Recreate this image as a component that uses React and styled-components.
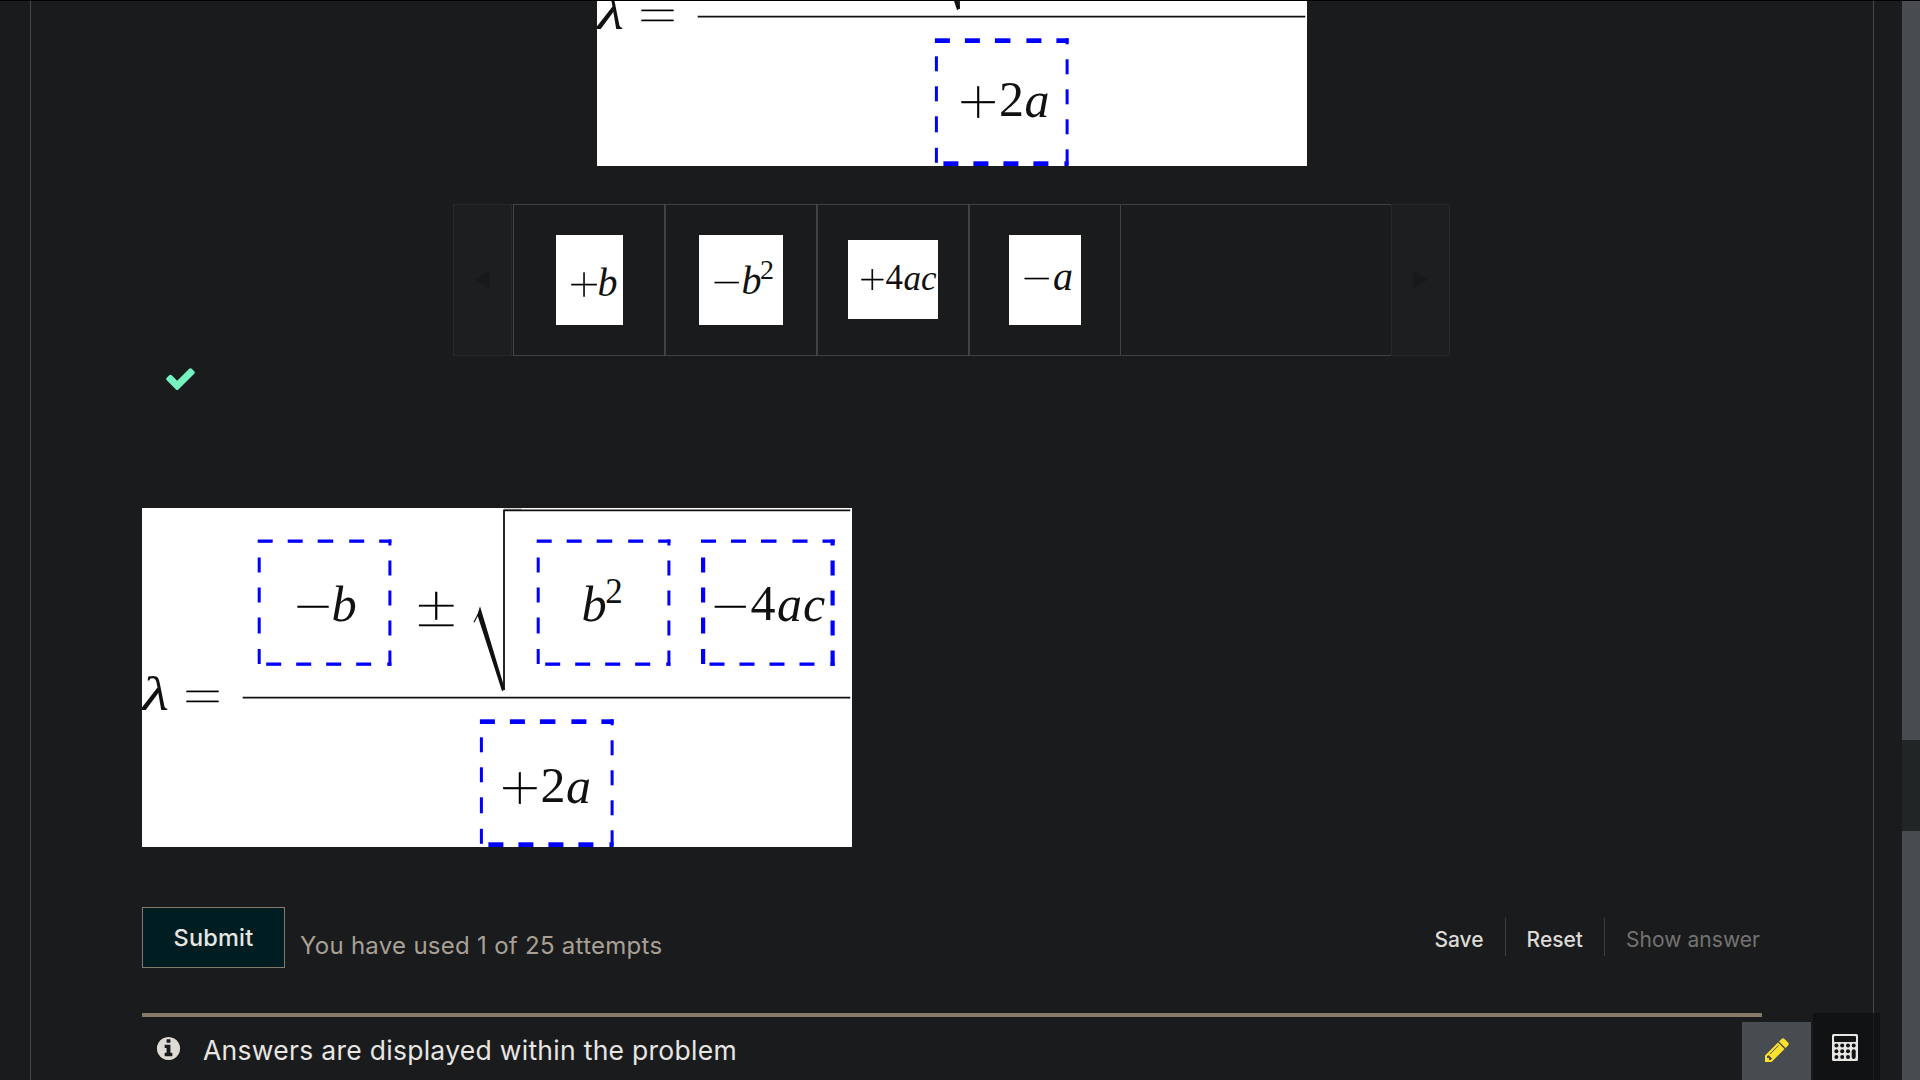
import React from "react";
import styled, { createGlobalStyle } from "styled-components";

const GlobalStyle = createGlobalStyle`
  * { box-sizing: border-box; }
  html, body { margin: 0; background: #1a1b1d; overflow: hidden; }
  body { font-family: Inter, "Liberation Sans", sans-serif; color: #e8e6e3; }
  button { font-family: inherit; cursor: pointer; }
`;

const Page = styled.div`
  display: flex;
  height: 1080px;
  border-top: 1px solid #000;
  overflow: hidden;
  background: #1a1b1d;
`;

const Frame = styled.main`
  width: 1844px;
  margin: 0 28px 0 30px;
  flex: none;
  border: solid #45494b;
  border-width: 0 1px;
  padding: 0 111px;
  overflow: hidden;
`;

const Problem = styled.section`
  display: flex;
  flex-direction: column;
  align-items: flex-start;
  margin-top: -174px;
  width: 1620px;
`;

const ScrollTrack = styled.div`
  display: flex;
  flex-direction: column;
  flex: none;
  width: 18px;
  background: #464c4f;
`;

const ScrollThumb = styled.div`
  height: 91px;
  margin-top: 739px;
  background: #212526;
`;

const Figure = styled.svg`
  display: block;
  flex: none;
  width: 710px;
  height: 339px;
  background: #fff;
  align-self: ${(p) => (p.$centered ? "center" : "flex-start")};
`;

const MathText = styled.text`
  font-family: "Liberation Serif", serif;
  font-style: ${(p) => (p.$upright ? "normal" : "italic")};
  font-size: ${(p) => p.$size}px;
  fill: #111;
`;

const OpText = styled.text`
  font-family: Inter, sans-serif;
  font-weight: 100;
  font-size: ${(p) => p.$size}px;
  text-anchor: middle;
  fill: #000;
  stroke: #000;
  stroke-width: 0.35px;
`;

const Tray = styled.div`
  display: flex;
  align-self: center;
  width: 998px;
  height: 152px;
  margin-top: 38px;
`;

const TrayArrow = styled.button`
  display: flex;
  align-items: center;
  justify-content: center;
  width: 59px;
  padding: 0 0 2px;
  background: #1d1e20;
  border: 1px solid #26282a;
  margin-right: ${(p) => (p.$gap ? "1px" : "0")};
`;

const TrayItems = styled.div`
  display: flex;
  width: 878px;
  border: solid #3d4244;
  border-width: 1px 0;
`;

const TrayItem = styled.div`
  display: flex;
  align-items: center;
  justify-content: center;
  width: 152px;
  border: solid #3e4546;
  border-width: 0 1px;
`;

const Tile = styled.svg`
  display: block;
  width: ${(p) => p.$w}px;
  height: ${(p) => p.$h}px;
  margin-bottom: ${(p) => (p.$h % 2 ? 1 : 0)}px;
  background: #fff;
`;

const Status = styled.div`
  height: 152px;
  padding: 6px 0 0 22px;
`;

const Icon = styled.svg`
  display: block;
  width: ${(p) => p.$size}px;
  height: ${(p) => p.$size}px;
  fill: ${(p) => p.$color};
`;

const Actions = styled.div`
  display: flex;
  width: 100%;
  height: 61px;
  margin-top: 60px;
`;

const Submit = styled.button`
  width: 143px;
  height: 61px;
  padding: 0;
  background: #001e22;
  border: 1px solid #857b6d;
  color: #e8e6e3;
  font-size: 23.5px;
  font-weight: 500;
  letter-spacing: 0.2px;
`;

const Attempts = styled.span`
  margin: 24px auto 0 15px;
  font-size: 24px;
  line-height: 30px;
  letter-spacing: 0.28px;
  color: #a8a095;
`;

const Links = styled.div`
  display: flex;
  height: 38px;
  margin-top: 11px;
`;

const LinkButton = styled.button`
  padding: 4px 21px 0;
  border: 0;
  border-left: ${(p) => (p.$first ? "0" : "1px solid #3b3e40")};
  background: none;
  font-size: 21px;
  font-weight: ${(p) => (p.disabled ? 400 : 500)};
  color: ${(p) => (p.disabled ? "#747371" : "#dddad5")};
  &:last-child { padding-right: 2px; letter-spacing: 0.05px; }
`;

const Notice = styled.div`
  display: flex;
  width: 100%;
  margin-top: 45px;
  padding: 16px 0 0 13px;
  border-top: 4px solid #857a69;
  font-size: 26.5px;
  line-height: 34px;
  letter-spacing: 0.28px;
`;

const NoticeIcon = styled.span`
  padding-top: 2px;
`;

const NoticeText = styled.span`
  margin-left: 21px;
`;

const Tools = styled.div`
  position: fixed;
  right: 40px;
  bottom: 0;
  display: flex;
  align-items: flex-end;
  gap: 2px;
`;

const PencilButton = styled.button`
  display: flex;
  justify-content: center;
  width: 69px;
  height: 58px;
  padding: 14px 0 0 1px;
  border: 0;
  background: #464c50;
`;

const CalcButton = styled.button`
  display: flex;
  width: 67px;
  height: 67px;
  padding: 21px 0 0 19px;
  border: 0;
  background: rgba(15, 16, 18, 0.75);
`;

const TOP = [[0, 15], [30, 45], [60, 75.5], [91.5, 106.5], [121.5, 133.7]];
const RIGHT = [[0, 6], [21, 36], [51, 66], [81, 96], [111, 126.3]];
const BOTTOM = [[8.5, 23.5], [38.5, 53.5], [68.5, 83.5], [98.5, 113.5], [129.5, 133.7]];
const LEFT = [[18, 33], [48, 63], [78, 94], [109.5, 124.5]];

function DropZone({ x, y, h = 126.3, tx = 3, ty = 3.3 }) {
  const w = 133.7;
  return (
    <g fill="#00f">
      {TOP.map(([a, b]) => <rect key={`t${a}`} x={x + a} y={y} width={b - a} height={ty} />)}
      {RIGHT.map(([a, b]) => <rect key={`r${a}`} x={x + w - tx} y={y + a} width={tx} height={b - a} />)}
      {BOTTOM.map(([a, b]) => <rect key={`b${a}`} x={x + a} y={y + h - ty} width={b - a} height={ty} />)}
      {LEFT.map(([a, b]) => <rect key={`l${a}`} x={x} y={y + a} width={tx} height={b - a} />)}
    </g>
  );
}

// cx, cy is the centre of the operator's drawn shape; stretch widens it
function Op({ cx, cy, size, stretch = 1, children }) {
  return (
    <OpText $size={size} transform={`translate(${cx} ${cy + size * 0.27}) scale(${stretch} 1)`}>
      {children}
    </OpText>
  );
}

function Formula({ centered, dx = 0, dy = 0 }) {
  return (
    <Figure $centered={centered} viewBox="0 0 710 339">
      <DropZone x={115.7} y={31.5} />
      <DropZone x={394.7} y={31.5} />
      <DropZone x={559} y={31.5} tx={4.2} />
      <DropZone x={337.9} y={211.3} h={127.7} ty={4.7} />
      <MathText $size={49} x={0} y={202} textLength={27} lengthAdjust="spacingAndGlyphs">λ</MathText>
      <Op cx={60.5} cy={188.7} size={52} stretch={1.8}>=</Op>
      <Op cx={171} cy={100} size={68} stretch={1.1}>−</Op>
      <MathText $size={50.5} x={189.5} y={113}>b</MathText>
      <Op cx={294.3} cy={103.8} size={71} stretch={1.17}>±</Op>
      <MathText $size={50.5} x={439.5} y={113}>b</MathText>
      <MathText $upright $size={35} x={463.3} y={94.5}>2</MathText>
      <Op cx={588.2} cy={100} size={68} stretch={1.1}>−</Op>
      <MathText $upright $size={50} x={608.5} y={112}>4</MathText>
      <MathText $size={50} x="635 661" y={113}>ac</MathText>
      <g transform={`translate(${dx} ${dy})`}>
        <Op cx={377.8} cy={281} size={76} stretch={1.06}>+</Op>
        <MathText $upright $size={50} x={398.5} y={294}>2</MathText>
        <MathText $size={50} x={424} y={294.5}>a</MathText>
      </g>
      <g fill="none" stroke="#111">
        <path d="M100.7 189.7H708.3" strokeWidth="1.7" />
        <path d="M332 114.3L338.3 102" strokeWidth="1.2" />
        <path d="M338 101L362 181L360.5 182L336.2 107Z" fill="#111" strokeWidth="1.6" />
        <path d="M362 182V2.3H708.3" strokeWidth="1.8" />
        <path d="M362 1.2H379.5" strokeWidth="1" opacity="0.5" />
      </g>
    </Figure>
  );
}

function CheckIcon() {
  return (
    <Icon $size={33} $color="#76f2c0" viewBox="0 0 1792 1792">
      <path d="M1671 566q0 40-28 68l-724 724-136 136q-28 28-68 28t-68-28l-136-136-362-362q-28-28-28-68t28-68l136-136q28-28 68-28t68 28l294 295 656-657q28-28 68-28t68 28l136 136q28 28 28 68z" />
    </Icon>
  );
}

function InfoIcon() {
  return (
    <Icon $size={27} $color="#dedad4" viewBox="0 0 1792 1792">
      <path d="M1152 1376v-160q0-14-9-23t-23-9h-96v-512q0-14-9-23t-23-9h-320q-14 0-23 9t-9 23v160q0 14 9 23t23 9h96v320h-96q-14 0-23 9t-9 23v160q0 14 9 23t23 9h448q14 0 23-9t9-23zm-128-896v-160q0-14-9-23t-23-9h-192q-14 0-23 9t-9 23v160q0 14 9 23t23 9h192q14 0 23-9t9-23zm640 416q0 209-103 385.5t-279.5 279.5-385.5 103-385.5-103-279.5-279.5-103-385.5 103-385.5 279.5-279.5 385.5-103 385.5 103 279.5 279.5 103 385.5z" />
    </Icon>
  );
}

function PencilIcon() {
  return (
    <Icon $size={28} $color="#fde22b" viewBox="0 0 1792 1792">
      <path d="M491 1536l91-91-235-235-91 91v107h128v128h107zm523-928q0-22-22-22-10 0-17 7l-542 542q-7 7-7 17 0 22 22 22 10 0 17-7l542-542q7-7 7-17zm-54-192l416 416-832 832h-416v-416zm683 96q0 53-37 90l-166 166-416-416 166-165q36-38 90-38 53 0 91 38l235 234q37 39 37 91z" />
    </Icon>
  );
}

const KEYS = [[4.4, 11.6], [10.2, 11.6], [16, 11.6], [21.7, 11.6], [4.4, 17.2], [10.2, 17.2], [16, 17.2], [4.4, 23], [10.2, 23], [16, 23]];

function CalculatorIcon() {
  return (
    <svg width="26" height="27" viewBox="0 0 26 27">
      <rect width="26" height="27" rx="1.5" fill="#e8e6e3" />
      <rect x="2" y="2" width="22" height="6" rx="1" fill="#121315" />
      {KEYS.map(([x, y]) => <circle key={`${x}-${y}`} cx={x} cy={y} r="2" fill="#121315" />)}
      <rect x="19.7" y="15.2" width="4" height="9.8" rx="2" fill="#121315" />
    </svg>
  );
}

export default function App() {
  return (
    <>
      <GlobalStyle />
      <Page>
        <Frame>
          <Problem>
            <Formula centered dx={3.4} dy={-5} />
            <Tray>
              <TrayArrow $gap aria-label="Previous">
                <svg width="15" height="19" viewBox="0 0 15 19"><path d="M15 0V19L0 9.5z" fill="#18191b" /></svg>
              </TrayArrow>
              <TrayItems>
                <TrayItem>
                  <Tile $w={67} $h={90} viewBox="0 0 67 90">
                    <Op cx={28} cy={50.8} size={58} stretch={1.06}>+</Op>
                    <MathText $size={40} x={41.5} y={60.8}>b</MathText>
                  </Tile>
                </TrayItem>
                <TrayItem>
                  <Tile $w={84} $h={90} viewBox="0 0 84 90">
                    <Op cx={27.8} cy={48} size={51} stretch={1.14}>−</Op>
                    <MathText $size={40} x={42.5} y={58.5}>b</MathText>
                    <MathText $upright $size={28} x={61} y={44}>2</MathText>
                  </Tile>
                </TrayItem>
                <TrayItem>
                  <Tile $w={90} $h={79} viewBox="0 0 90 79">
                    <Op cx={24.3} cy={40.2} size={50} stretch={1.06}>+</Op>
                    <MathText $upright $size={35} x={37.5} y={49.3}>4</MathText>
                    <MathText $size={35} x="55.5 73" y={49.5}>ac</MathText>
                  </Tile>
                </TrayItem>
                <TrayItem>
                  <Tile $w={72} $h={90} viewBox="0 0 72 90">
                    <Op cx={27.8} cy={44.6} size={51} stretch={1.14}>−</Op>
                    <MathText $size={40} x={44} y={55}>a</MathText>
                  </Tile>
                </TrayItem>
              </TrayItems>
              <TrayArrow aria-label="Next">
                <svg width="15" height="19" viewBox="0 0 15 19"><path d="M0 0V19L15 9.5z" fill="#18191b" /></svg>
              </TrayArrow>
            </Tray>
            <Status><CheckIcon /></Status>
            <Formula />
            <Actions>
              <Submit>Submit</Submit>
              <Attempts>You have used 1 of 25 attempts</Attempts>
              <Links>
                <LinkButton $first>Save</LinkButton>
                <LinkButton>Reset</LinkButton>
                <LinkButton disabled>Show answer</LinkButton>
              </Links>
            </Actions>
            <Notice>
              <NoticeIcon><InfoIcon /></NoticeIcon>
              <NoticeText>Answers are displayed within the problem</NoticeText>
            </Notice>
          </Problem>
        </Frame>
        <ScrollTrack><ScrollThumb /></ScrollTrack>
      </Page>
      <Tools>
        <PencilButton aria-label="Edit"><PencilIcon /></PencilButton>
        <CalcButton aria-label="Calculator"><CalculatorIcon /></CalcButton>
      </Tools>
    </>
  );
}
